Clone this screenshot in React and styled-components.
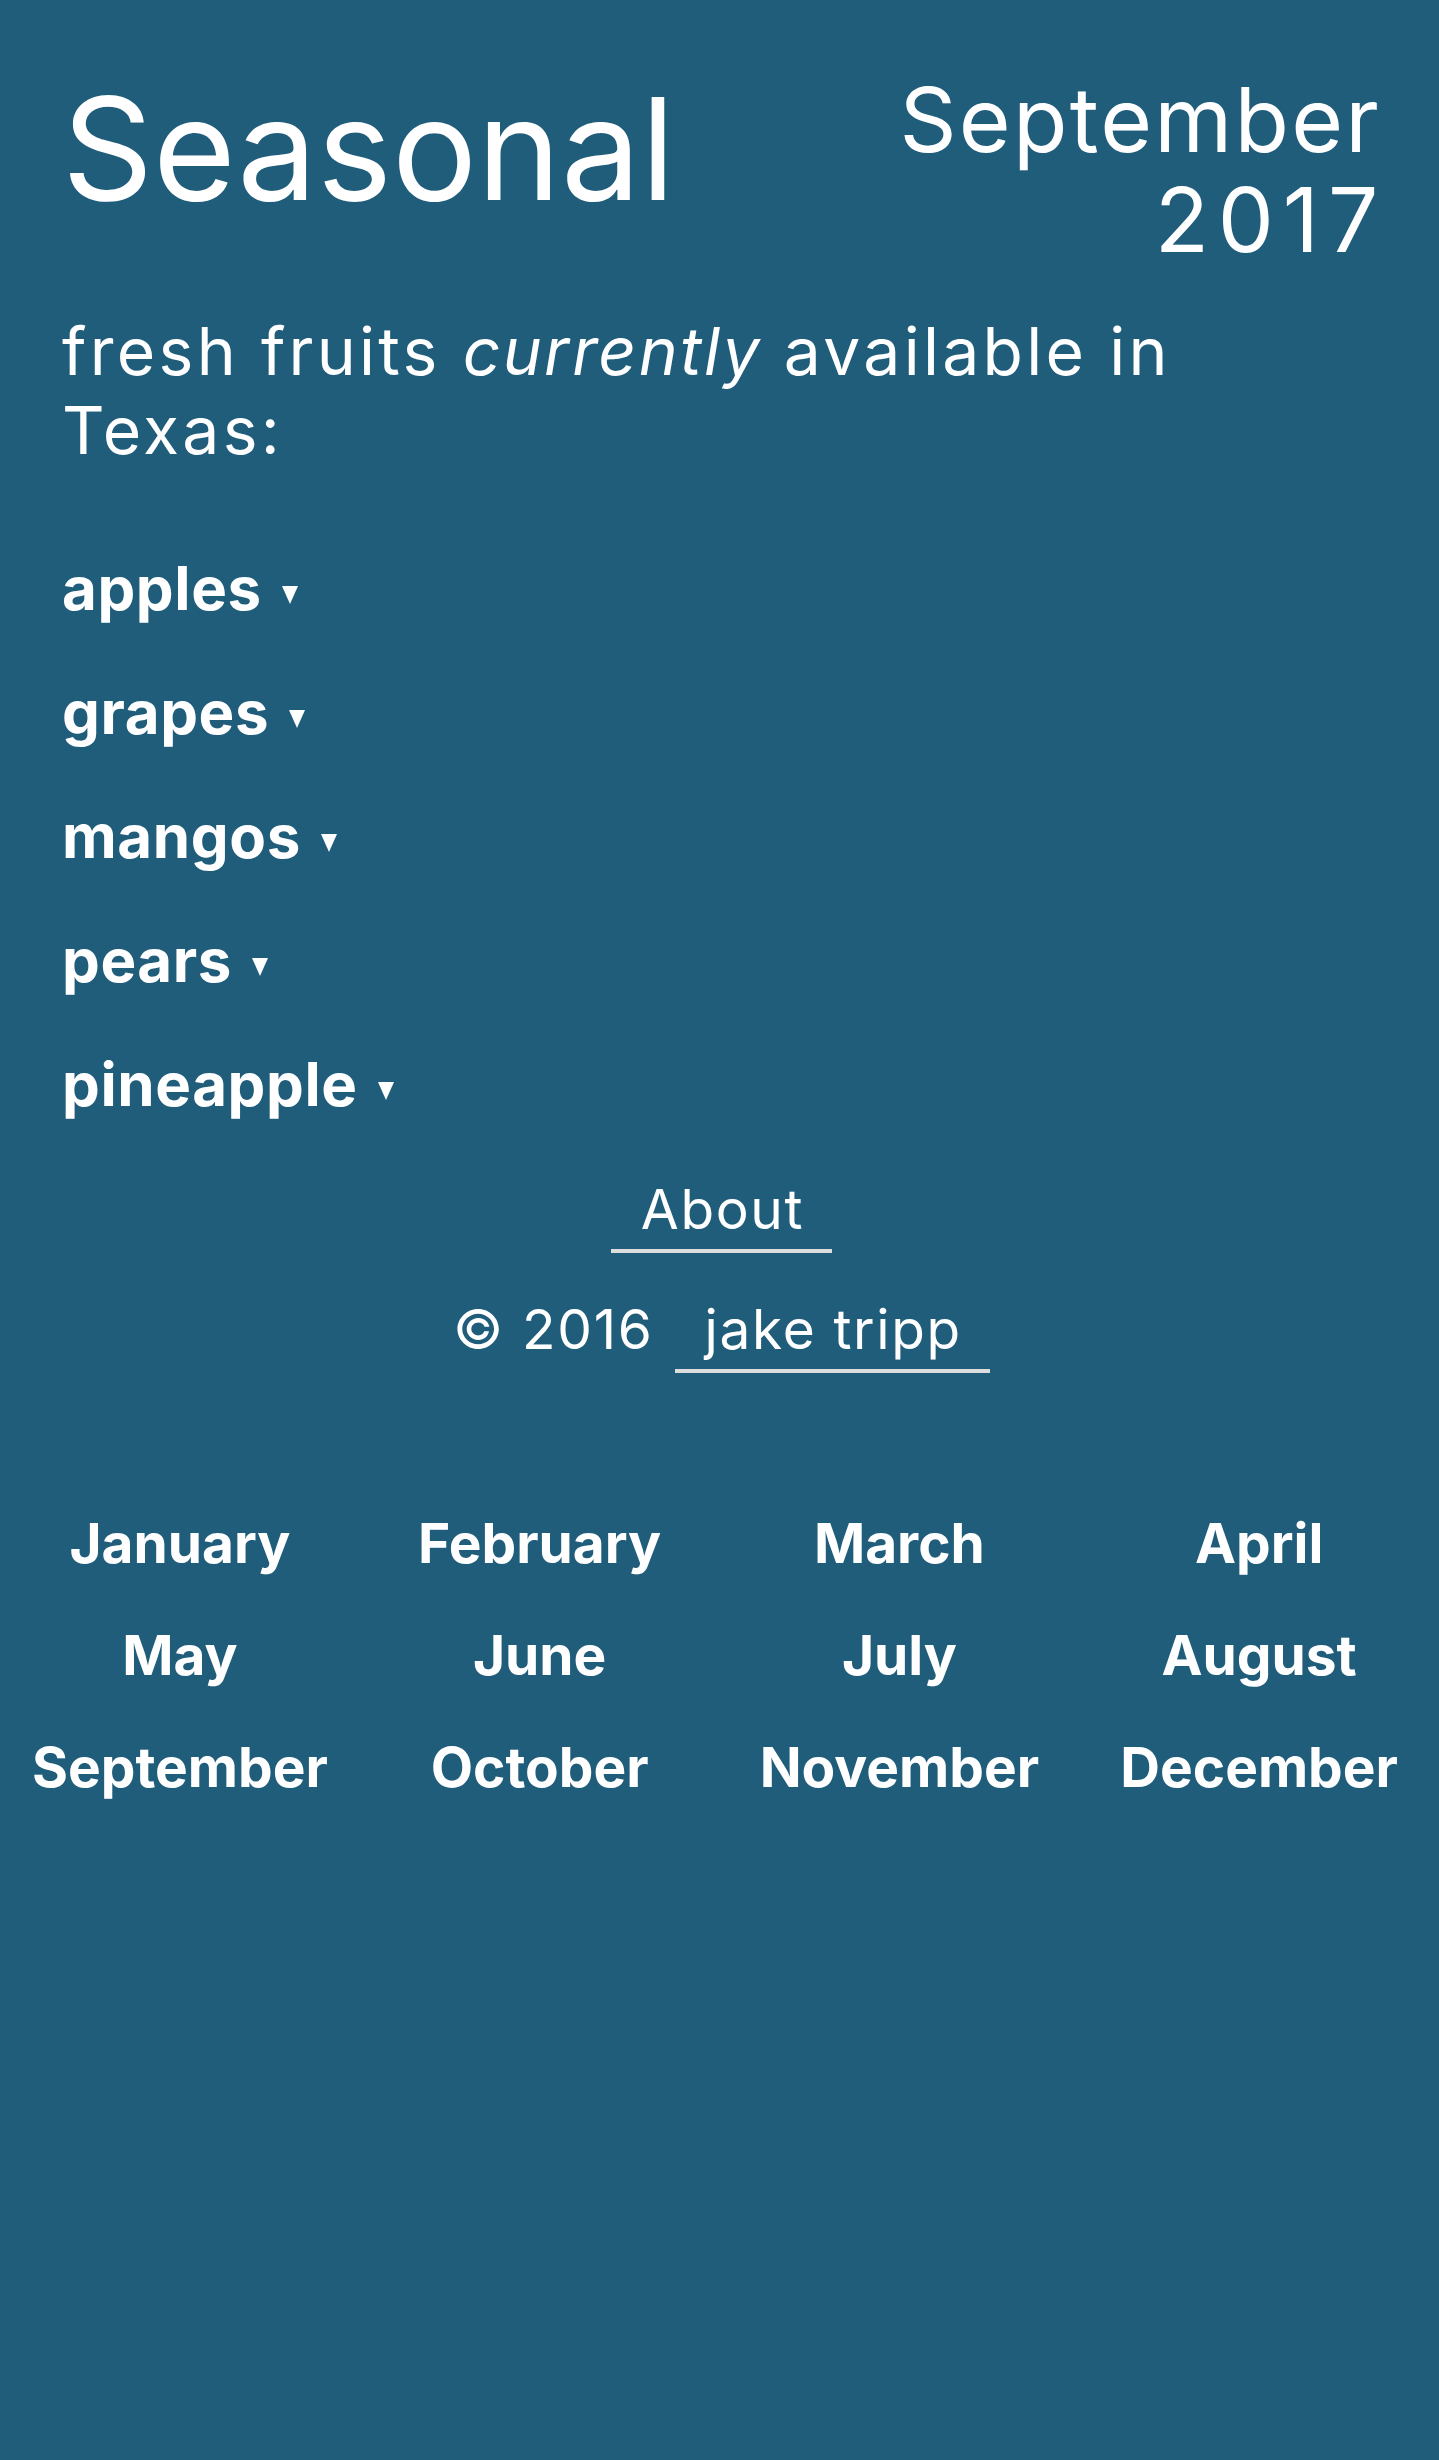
import React from 'react';
import styled, { createGlobalStyle } from 'styled-components';

const Global = createGlobalStyle`
  html, body { margin: 0; padding: 0; background: #1f5d7b; }
  body {
    font-family: Inter, "Open Sans", "DejaVu Sans", sans-serif;
    color: #ffffff;
  }
  * { box-sizing: border-box; }
`;

const Page = styled.div`
  min-height: 2460px;
  background: #1f5d7b;
  padding-top: 70px;
`;

const Main = styled.main`
  padding: 0 58px 0 62px;
`;

const Header = styled.header`
  display: flex;
  justify-content: space-between;
  align-items: flex-start;
`;

const Title = styled.h1`
  margin: 7px 0 0;
  font-size: 142px;
  font-weight: 400;
  line-height: 1;
`;

const DateBlock = styled.div`
  text-align: right;
  font-size: 89px;
  line-height: 100px;
  letter-spacing: 0.025em;
`;

const Year = styled.span`
  letter-spacing: 0.1em;
  margin-right: -0.07em;
`;

const Subtitle = styled.p`
  margin: 42px 0 0;
  max-width: 1200px;
  font-size: 66px;
  line-height: 79px;
  letter-spacing: 0.05em;

  em {
    font-style: italic;
    letter-spacing: 0.035em;
  }
`;

const FruitList = styled.ul`
  list-style: none;
  margin: 56px 0 0;
  padding: 0;
`;

const Fruit = styled.li`
  font-size: 60px;
  font-weight: 700;
  line-height: 124px;
  letter-spacing: 0.01em;
`;

const Caret = styled.span`
  display: inline-block;
  margin: 0 0 6px 20px;
  border-left: 8.5px solid transparent;
  border-right: 8.5px solid transparent;
  border-top: 18px solid #ffffff;
`;

const Footer = styled.footer`
  margin-top: 33px;
`;

const FooterRow = styled.div`
  text-align: center;
  font-size: 55px;
  line-height: 60px;
  letter-spacing: 0.03em;
  margin-top: ${p => p.$gap || 0}px;
`;

const FooterLink = styled.a`
  display: inline-block;
  margin-left: ${p => p.$offset || 0}px;
  padding: 0 28px 10px 30px;
  border-bottom: 4px solid #dddddd;
  color: #ffffff;
  text-decoration: none;
`;

const MonthGrid = styled.nav`
  display: grid;
  grid-template-columns: repeat(4, 1fr);
  margin-top: 114px;
`;

const Month = styled.a`
  text-align: center;
  font-size: 55px;
  font-weight: 700;
  line-height: 112px;
  color: #ffffff;
  text-decoration: none;
  white-space: nowrap;
`;

const fruits = ['apples', 'grapes', 'mangos', 'pears', 'pineapple'];
const months = [
  'January', 'February', 'March', 'April',
  'May', 'June', 'July', 'August',
  'September', 'October', 'November', 'December',
];

export default function App() {
  return (
    <Page>
      <Global />
      <Main>
        <Header>
          <Title>Seasonal</Title>
          <DateBlock>
            September
            <br />
            <Year>2017</Year>
          </DateBlock>
        </Header>
        <Subtitle>
          fresh fruits <em>currently</em> available in Texas:
        </Subtitle>
        <FruitList>
          {fruits.map(f => (
            <Fruit key={f}>
              {f}
              <Caret />
            </Fruit>
          ))}
        </FruitList>
        <Footer>
          <FooterRow>
            <FooterLink href="#about">About</FooterLink>
          </FooterRow>
          <FooterRow $gap={46}>
            © 2016 <FooterLink href="#jake" $offset={4}>jake tripp</FooterLink>
          </FooterRow>
        </Footer>
      </Main>
      <MonthGrid>
        {months.map(m => (
          <Month key={m} href={`#${m.toLowerCase()}`}>{m}</Month>
        ))}
      </MonthGrid>
    </Page>
  );
}
